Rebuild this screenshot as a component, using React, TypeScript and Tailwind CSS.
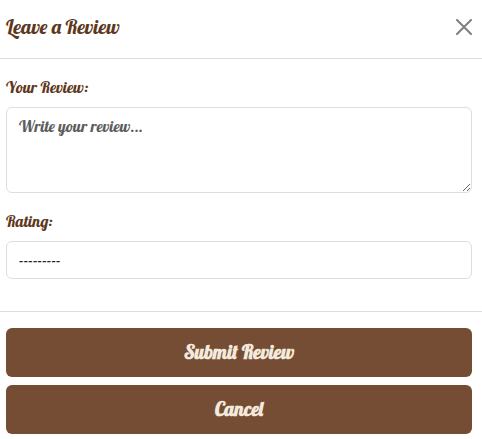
import type { ReactNode } from "react";

const script = "font-['Lobster','Liberation_Serif',serif] whitespace-nowrap";

function Label({ htmlFor, className = "", children }: { htmlFor: string; className?: string; children: ReactNode }) {
  return (
    <label htmlFor={htmlFor} className={`block h-6 text-[16px] leading-6 text-[#5e3720] ${script} ${className}`}>
      {children}
    </label>
  );
}

function ActionButton({ children }: { children: ReactNode }) {
  return (
    <button
      type="button"
      className={`flex h-[49px] w-full items-center justify-center rounded-md bg-[#754d34] pb-px text-[19.2px] font-bold text-[#f3e9dc] ${script}`}
    >
      <span>{children}</span>
    </button>
  );
}

export default function App() {
  return (
    <div className="h-[439px] w-[482px] overflow-hidden bg-white">
      <header className="flex h-[59px] items-center justify-between border-b border-[#dedede] pr-2.5 pb-1 pl-1.5">
        <h1 className={`text-[20px] leading-[30px] text-[#5e3720] ${script}`}>Leave a Review</h1>
        <button type="button" aria-label="Close">
          <svg className="block size-4" viewBox="0 0 16 16" fill="none" stroke="#7f7f7f" strokeWidth="2" strokeLinecap="round">
            <path d="M1 1l14 14M15 1L1 15" />
          </svg>
        </button>
      </header>

      <main className="h-[252px] pt-4 pr-2.5 pl-1.5">
        <Label htmlFor="review">Your Review:</Label>
        <textarea
          id="review"
          placeholder="Write your review..."
          className={`mt-2 block h-[86px] w-full resize rounded-md border border-[#dedede] px-3 py-1.5 text-[16px] leading-6 outline-none placeholder:text-[#5c5c5c] ${script}`}
        />
        <Label htmlFor="rating" className="mt-4">Rating:</Label>
        <select
          id="rating"
          className={`mt-2 block h-[38px] w-full appearance-none rounded-md border border-[#dedede] bg-white px-3 text-[16px] leading-6 text-[#212121] outline-none ${script}`}
        >
          <option>---------</option>
        </select>
      </main>

      <footer className="flex flex-col gap-2 border-t border-[#dedede] pt-4 pr-2.5 pl-1.5">
        <ActionButton>Submit Review</ActionButton>
        <ActionButton>Cancel</ActionButton>
      </footer>
    </div>
  );
}
